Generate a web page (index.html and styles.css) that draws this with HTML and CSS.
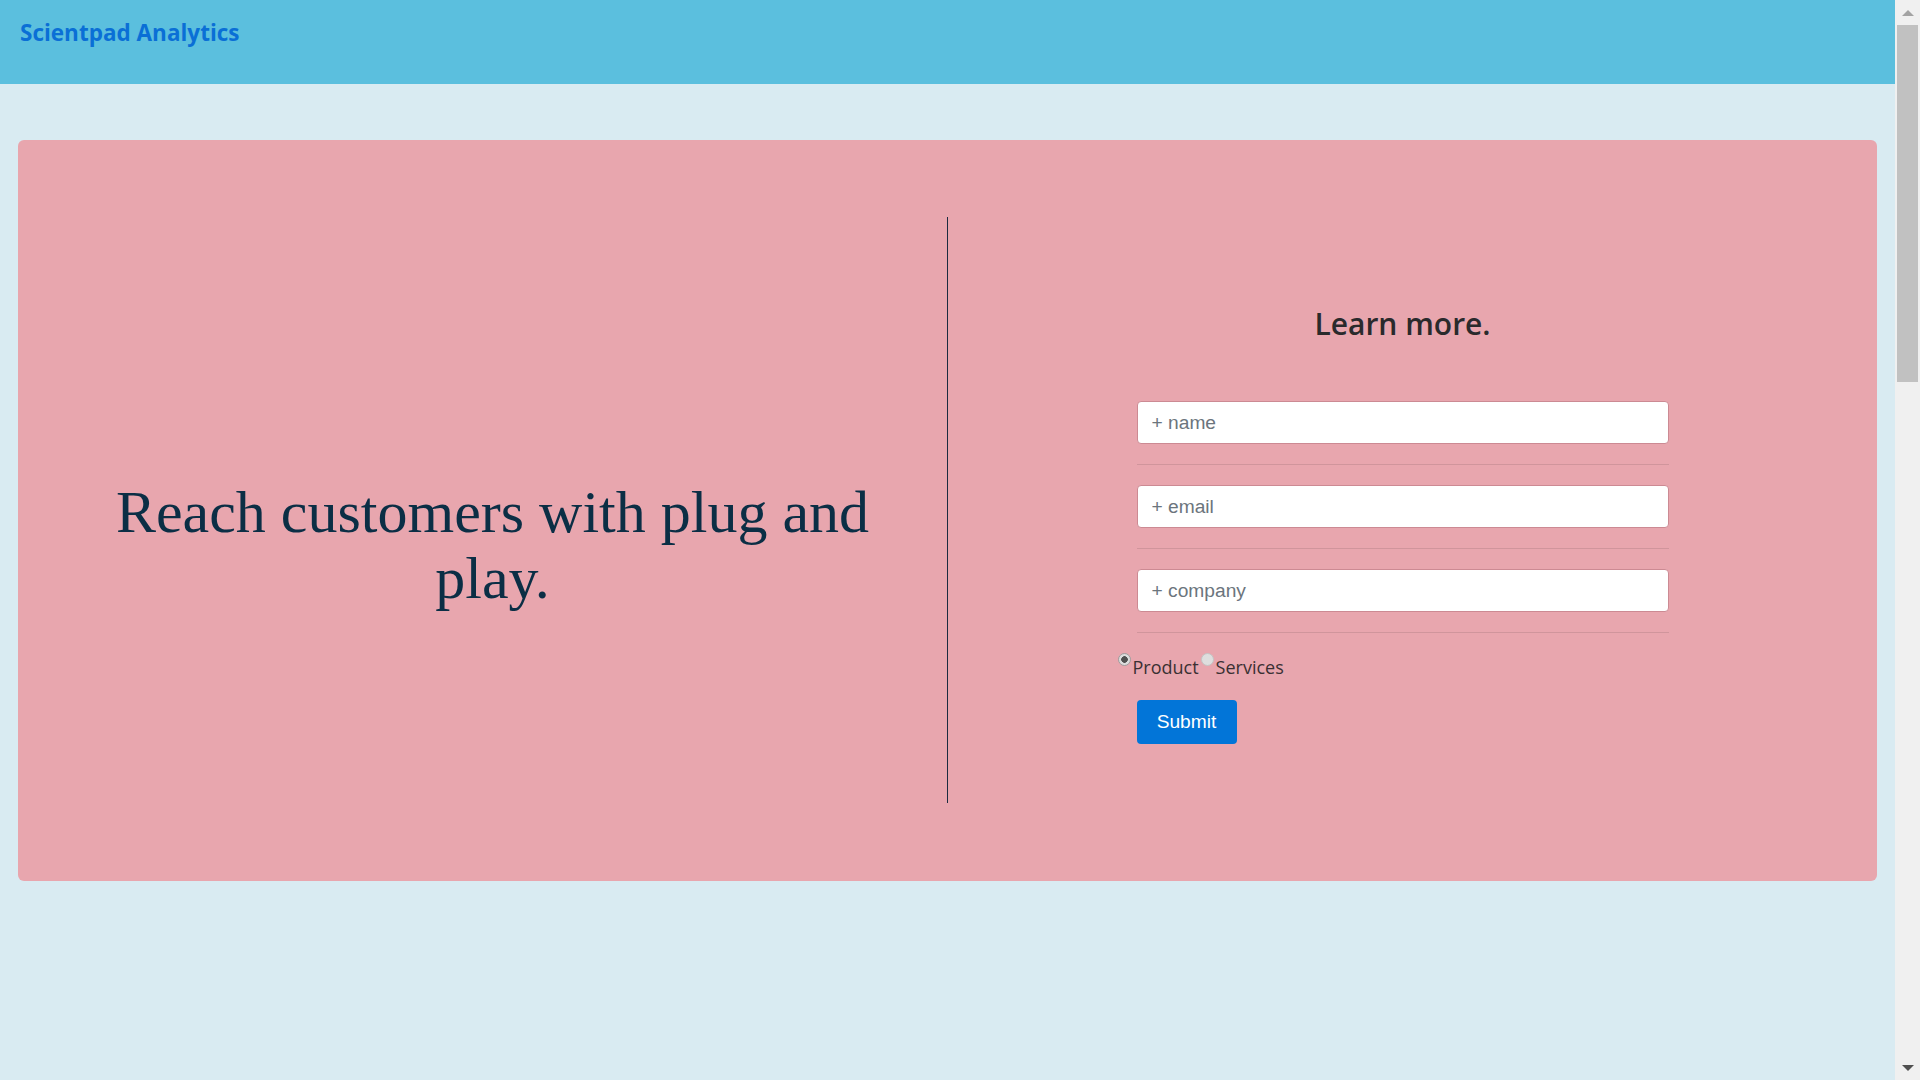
FILE: index.html
```html
<!DOCTYPE html>
<html lang="en">
<head>
<meta charset="utf-8">
<title>Scientpad Analytics</title>
<link rel="stylesheet" href="styles.css">
</head>
<body>
<div class="page">
  <header class="topbar">
    <a class="brand" href="#">Scientpad Analytics</a>
  </header>
  <main class="content">
    <section class="card">
      <div class="pitch">
        <h1 class="pitch-title">Reach customers with plug and play.</h1>
      </div>
      <div class="divider"></div>
      <div class="signup">
        <h2 class="signup-title">Learn more.</h2>
        <form class="signup-form">
          <input class="field" type="text" placeholder="+ name">
          <hr class="sep">
          <input class="field" type="email" placeholder="+ email">
          <hr class="sep">
          <input class="field" type="text" placeholder="+ company">
          <hr class="sep">
          <div class="choice">
            <input class="radio" type="radio" name="kind" id="k1" checked>
            <label class="choice-label" for="k1">Product</label>
            <input class="radio" type="radio" name="kind" id="k2">
            <label class="choice-label" for="k2">Services</label>
          </div>
          <button class="submit" type="button">Submit</button>
        </form>
      </div>
    </section>
  </main>
</div>
<div class="scrollbar" aria-hidden="true">
  <div class="sb-btn"><span class="arrow-up"></span></div>
  <div class="sb-thumb"></div>
  <div class="sb-track"></div>
  <div class="sb-btn"><span class="arrow-down"></span></div>
</div>
</body>
</html>
```

FILE: styles.css
```css
html, body {
  margin: 0;
  padding: 0;
  height: 100%;
}

body {
  display: flex;
  overflow: hidden;
  background: #d9ebf2;
  font-family: "Open Sans", "Liberation Sans", sans-serif;
}

.page {
  flex: 1;
  min-width: 0;
}

.topbar {
  height: 84px;
  box-sizing: border-box;
  padding: 18px 20px 0;
  background: #5bbfde;
}

.brand {
  font-family: "Open Sans", sans-serif;
  font-weight: 700;
  font-size: 22.5px;
  line-height: 30px;
  color: #0a6fd6;
  text-decoration: none;
}

.content {
  padding: 56px 18px 0;
}

.card {
  display: grid;
  grid-template-columns: 1fr 1px 1fr;
  height: 586px;
  padding: 77px 20px 78px;
  background: #e8a6ae;
  border-radius: 6px;
}

.pitch {
  min-width: 0;
  padding: 262px 60px 0;
  text-align: center;
}

.pitch-title {
  margin: 0;
  font-family: "Liberation Serif", "Times New Roman", serif;
  font-weight: 400;
  font-size: 60px;
  line-height: 66px;
  color: #0b2e45;
}

.divider {
  background: #1b2b40;
}

.signup {
  min-width: 0;
  display: flex;
  flex-direction: column;
  align-items: center;
  padding-top: 88px;
}

.signup-title {
  margin: 0 0 58px;
  font-family: "Open Sans", sans-serif;
  font-weight: 600;
  font-size: 30px;
  line-height: 38px;
  color: #2a2a2c;
}

.signup-form {
  width: 532px;
}

.field {
  display: block;
  width: 100%;
  height: 43px;
  box-sizing: border-box;
  margin: 0;
  padding: 0 14px;
  border: 1px solid #cc8a93;
  border-radius: 4px;
  background: #fff;
  font-family: "Liberation Sans", Arial, sans-serif;
  font-size: 19.2px;
  color: #495057;
  outline: none;
}

.field::placeholder {
  color: #6c757d;
}

.sep {
  margin: 20px 0;
  border: 0;
  border-top: 1px solid rgba(0, 0, 0, 0.1);
}

.choice {
  display: flex;
  align-items: flex-start;
  margin-left: -19px;
}

.radio {
  appearance: none;
  -webkit-appearance: none;
  width: 13px;
  height: 13px;
  margin: 0 2px 0 0;
  box-sizing: border-box;
  border-radius: 50%;
  border: 1px solid #c4c4c4;
  background: #dedede;
}

.radio:checked {
  border-color: #9e9e9e;
  background: radial-gradient(circle, #505050 0 3px, #dcdcdc 3.6px);
}

.choice-label {
  padding-top: 2px;
  margin-right: 2px;
  font-family: "Open Sans", sans-serif;
  font-size: 18px;
  line-height: 24px;
  color: #3a3033;
}

.submit {
  display: block;
  margin-top: 21px;
  width: 100px;
  height: 44px;
  padding: 0;
  border: 0;
  border-radius: 4px;
  background: #0275d8;
  color: #fff;
  font-family: "Liberation Sans", Arial, sans-serif;
  font-size: 19.2px;
}

.scrollbar {
  width: 25px;
  flex: none;
  display: flex;
  flex-direction: column;
  background: #f0f0f0;
}

.sb-btn {
  height: 25px;
  display: flex;
  align-items: center;
  justify-content: center;
}

.arrow-up {
  width: 0;
  height: 0;
  border-left: 6px solid transparent;
  border-right: 6px solid transparent;
  border-bottom: 6px solid #a3a3a3;
}

.arrow-down {
  width: 0;
  height: 0;
  border-left: 6px solid transparent;
  border-right: 6px solid transparent;
  border-top: 6px solid #505050;
}

.sb-thumb {
  height: 357px;
  margin: 0 2px;
  background: #c1c1c1;
}

.sb-track {
  flex: 1;
}
```
